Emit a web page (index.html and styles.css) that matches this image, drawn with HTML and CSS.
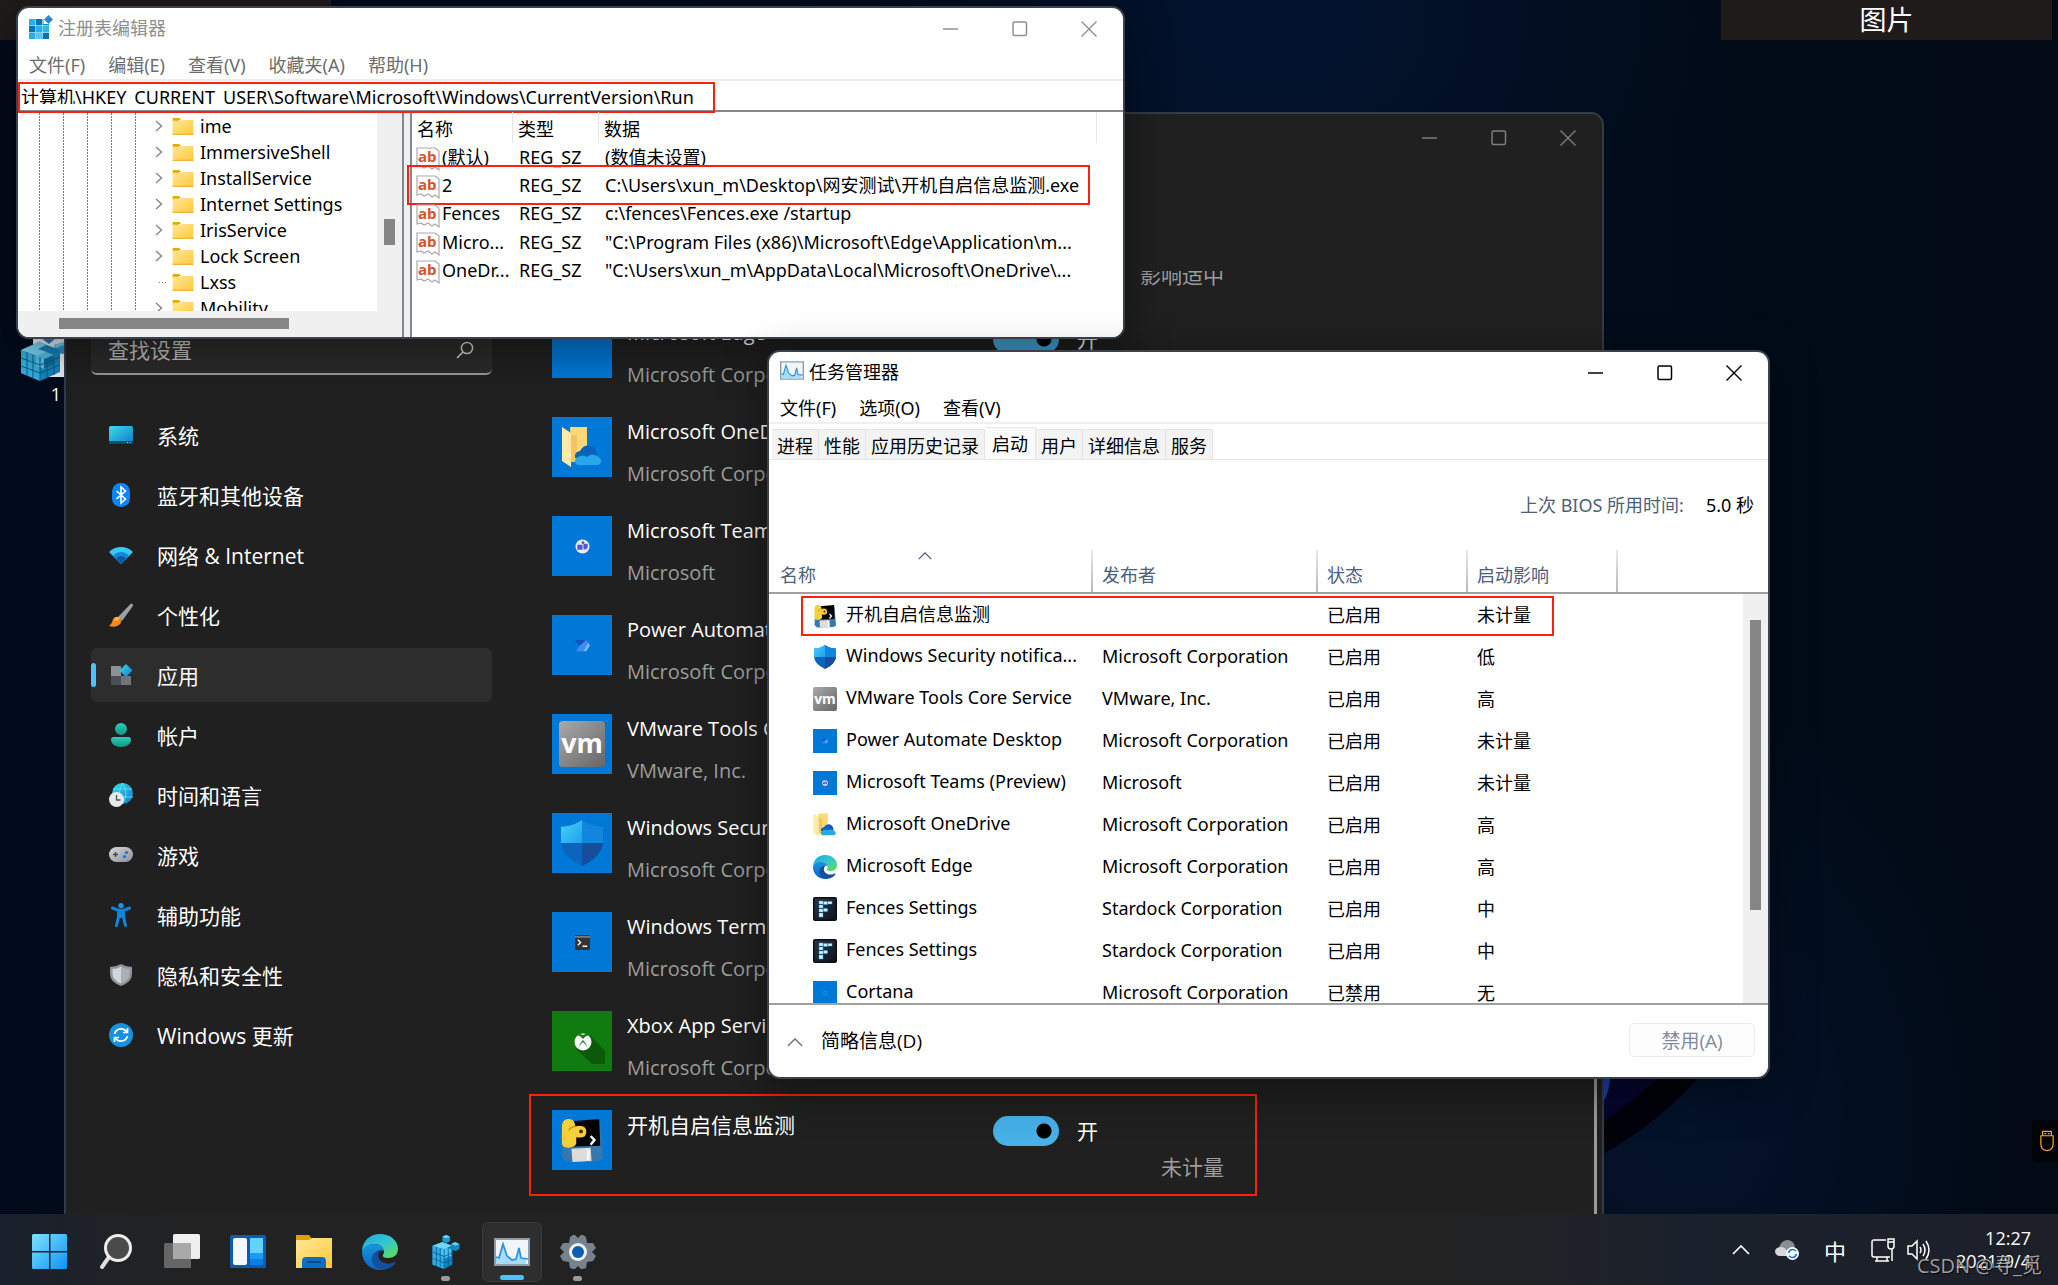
FILE: index.html
```html
<!DOCTYPE html>
<html lang="zh-CN">
  <head>
    <meta charset="UTF-8" />
    <meta name="viewport" content="width=device-width, initial-scale=1.0" />
    <title>任务管理器</title>
    <link rel="stylesheet" href="styles.css">
  </head>
  <body>
    <!-- 图标 -->
    <svg class="sprite" aria-hidden="true">
      <defs>
        <linearGradient id="gFolder" x1="0" y1="0" x2="1" y2="1"><stop offset="0" stop-color="#ffe79b"/><stop offset="1" stop-color="#ffc938"/></linearGradient>
        <linearGradient id="gSky" x1="0" y1="0" x2="1" y2="1"><stop offset="0" stop-color="#37e0e6"/><stop offset="1" stop-color="#1377cf"/></linearGradient>
        <linearGradient id="gGrey" x1="0" y1="0" x2="1" y2="1"><stop offset="0" stop-color="#d5d8dc"/><stop offset="1" stop-color="#8b9097"/></linearGradient>
        <linearGradient id="gWin" x1="0" y1="0" x2="1" y2="1"><stop offset="0" stop-color="#80e2ff"/><stop offset="1" stop-color="#0a94f5"/></linearGradient>
        <linearGradient id="gTeal" x1="0" y1="0" x2="0" y2="1"><stop offset="0" stop-color="#2bd0b8"/><stop offset="1" stop-color="#109682"/></linearGradient>
        <linearGradient id="gEdgeTop" x1="0" y1="0" x2="1" y2="1"><stop offset="0" stop-color="#1fa6e0"/><stop offset=".5" stop-color="#33c6cf"/><stop offset="1" stop-color="#63e04a"/></linearGradient>
        <linearGradient id="gEdge" x1="0" y1="0" x2="0" y2="1"><stop offset="0" stop-color="#1a95dc"/><stop offset="1" stop-color="#0a63c4"/></linearGradient>
        <linearGradient id="gVm" x1="0" y1="0" x2="1" y2="1"><stop offset="0" stop-color="#a9a9a9"/><stop offset="1" stop-color="#666"/></linearGradient>
        <linearGradient id="gFence" x1="0" y1="0" x2="1" y2="1"><stop offset="0" stop-color="#2b3645"/><stop offset="1" stop-color="#0e141c"/></linearGradient>
        <linearGradient id="gShieldL" x1="0" y1="0" x2="1" y2="1"><stop offset="0" stop-color="#45d2fa"/><stop offset="1" stop-color="#1ea2ec"/></linearGradient>
      </defs>
      <symbol id="i-folder" viewBox="0 0 22 18"><path d="M0 0h7l2 2h-2v3H0z" fill="#e8a90c"/><path d="M0 3h8l2-1h12v16H0z" fill="url(#gFolder)"/><path d="M0 16.6h22V18H0z" fill="#eab53a"/></symbol>
      <symbol id="i-chev" viewBox="0 0 8 12"><path d="M1 1l5.500 5L1 11" fill="none" stroke="#8a8a8a" stroke-width="1.500"/></symbol>
      <symbol id="i-ab" viewBox="0 0 24 24"><path d="M1 1h18l4 3v19l-4-3-3 2-4-3-4 2-3-2-4 1z" fill="#fff" stroke="#a9a9a9" stroke-width="1.200"/><text x="2" y="15" font-family="Open Sans" font-size="15" font-weight="700" fill="#d9512c">ab</text></symbol>
      <symbol id="i-min" viewBox="0 0 16 16"><path d="M0 8h15" stroke="currentColor" stroke-width="1.400"/></symbol>
      <symbol id="i-max" viewBox="0 0 16 16"><rect x="1" y="1" width="13.500" height="13.500" rx="1.500" fill="none" stroke="currentColor" stroke-width="1.500"/></symbol>
      <symbol id="i-close" viewBox="0 0 16 16"><path d="M.5.5l15 15M15.500.5l-15 15" stroke="currentColor" stroke-width="1.400"/></symbol>
      <symbol id="i-up" viewBox="0 0 18 10"><path d="M1 9l8-8 8 8" fill="none" stroke="currentColor" stroke-width="1.700"/></symbol>
      <symbol id="i-find" viewBox="0 0 18 18"><circle cx="11" cy="7" r="5.600" fill="none" stroke="currentColor" stroke-width="1.500"/><path d="M7 11l-6 6" stroke="currentColor" stroke-width="1.600"/></symbol>
      <symbol id="i-reg" viewBox="0 0 24 24">
        <path d="M0 4h20v20H0z" fill="#0c8ac9"/><path d="M0 4h6v6H0zM7 11h6v6H7zM0 18h6v6H0z" fill="#27aee8"/><path d="M7 4h6v6H7zM0 11h6v6H0zM14 18h6v6h-6z" fill="#0a73b4"/><path d="M7 18h6v6H7z" fill="#54c8f2"/><path d="M14 11h6v6h-6z" fill="#35b6ea"/>
        <path d="M6.500 4v20M13.500 4v20M0 10.500h20M0 17.500h20" stroke="#bdeaff" stroke-width=".7"/>
        <path d="M14.500 0H24v9h-9.500z" fill="#fff"/><path d="M19.500 0l4.500 4.500L19.500 9 15 4.500z" fill="#1a92cf"/>
      </symbol>
      <symbol id="i-cubes" viewBox="0 0 32 40">
        <path d="M12 9l11 4v21l-9 5-13-5V13z" fill="#0a86c4"/>
        <path d="M1 13l13 4v22L1 34z" fill="#29aee2"/><path d="M12 9l11 4-9 4-13-4z" fill="#6fd4f5"/>
        <path d="M15 17l8-4v9l-8 4z" fill="#0b6ca3"/><path d="M10 18l8-3 4 2v7l-7 3-5-2z" fill="#4fc2ee"/>
        <path d="M1 20l13 5 9-4M1 27l13 5 9-4M5.300 14.500v21M9.600 16v21M14 17v22M18.500 15v22" stroke="#07618f" stroke-width=".9" fill="none"/>
        <path d="M16 1l4.500 2v5l-4 2-4.500-2V3z" fill="#1a9bd6"/><path d="M16 1l4.500 2-4 1.500L12 3z" fill="#7bdcf9"/>
        <path d="M26 9l5 2v6l-4.500 2-5-2v-6z" fill="#1387c0"/><path d="M26 9l5 2-4.500 2-5-2z" fill="#60cdf2"/>
      </symbol>
      <symbol id="i-regfile" viewBox="0 0 44 46">
        <path d="M13 0h31v41H13z" fill="#e9ecee"/>
        <path d="M21 2l8-4 8 3-8 7z" fill="#1b82b5"/><path d="M34 9l10-3v12l-8-1z" fill="#2796c9"/><path d="M34 9l10-3v3l-8 3z" fill="#6fd0f2"/>
        <path d="M1 14L19 6l21 8v22l-20 9L1 37z" fill="#1585bb"/>
        <path d="M1 14l19 7v24L1 37z" fill="#35aede"/><path d="M1 14L19 6l7 3-8 4 9 3-7 5z" fill="#7bd3f2"/>
        <path d="M16 20l10-4 8 3v10l-10 4-8-3z" fill="#54c0ea"/><path d="M24 23l10-4v10l-10 4z" fill="#0e6d9f"/>
        <path d="M1 22l19 7 20-8M1 30l19 7 20-8M7 16v24M13 18.500v24M20 21v24M27 26v16M34 23v16" stroke="#0a5d88" stroke-width="1" fill="none"/>
      </symbol>
      <symbol id="i-task" viewBox="0 0 36 28"><path d="M0 0h36v28H0z" fill="#8c9cab"/><path d="M2 2h32v24H2z" fill="#f1f5f8"/><path d="M2 26v-7l3 1 4-14 4 12 5 4 4-1 3-11 2 10 5 1v5z" fill="#a9dcfa"/><path d="M2 19l3 1 4-14 4 12 5 4 4-1 3-11 2 10 7 1" fill="none" stroke="#2b93dc" stroke-width="1.700"/></symbol>
      <symbol id="i-app" viewBox="0 0 48 48"><path d="M5 6l38-1 3 38-5 3L8 47 3 42z" fill="#3478ae"/><path d="M7 5l35-3 1 28-34 1z" fill="#020202"/><path d="M13 33l20-1 1 14-20 1z" fill="#dcdcdc"/><path d="M29 34h3v11h-3z" fill="#f5f5f5"/><path d="M3 10q0-8 7-8 7 0 7 8 6-2 10 1 3 4 0 9-3 2-9 1v7q-2 4-8 4-7 0-7-5z" fill="#f7cf3b"/><path d="M10 14q3-4 7-4" stroke="#c99a10" stroke-width="1.500" fill="none"/><circle cx="23" cy="15" r="2" fill="#3b2f0a"/><path d="M33 20l4 4-4 5" fill="none" stroke="#fff" stroke-width="2.500"/></symbol>
      <symbol id="i-shield" viewBox="0 0 24 24"><path d="M12 0q5 3.500 11 3.500V11q0 8-11 13Q1 19 1 11V3.500Q7 3.500 12 0z" fill="#0d64bd"/><path d="M12 0v12H1V3.500Q7 3.500 12 0z" fill="url(#gShieldL)"/><path d="M12 0q5 3.500 11 3.500V12H12z" fill="#1186dc"/><path d="M12 12h11q-1 7-11 12z" fill="#154f9c"/></symbol>
      <symbol id="i-shieldgrey" viewBox="0 0 24 24"><path d="M12 1q5 3 11 3v7q0 8-11 12Q1 19 1 11V4q6 0 11-3z" fill="#8f959c"/><path d="M12 3.500v17Q3.500 17 3.500 11V6q5 0 8.500-2.500z" fill="#d3d6db"/><path d="M12 3.500v17q8.500-3.500 8.500-9.500V6q-5 0-8.500-2.500z" fill="#abb0b7"/></symbol>
      <symbol id="i-vm" viewBox="0 0 24 24"><rect width="24" height="24" rx="2" fill="url(#gVm)"/><text x="12" y="16.500" text-anchor="middle" font-family="Open Sans" font-weight="700" font-size="14" fill="#fff">vm</text></symbol>
      <symbol id="i-onedrive" viewBox="0 0 40 42"><path d="M8 1h17v32H10z" fill="#fcd877"/><path d="M0 1l9 6v34l-9-6z" fill="#ffe9a6"/><path d="M9 36h6V9H9z" fill="#f4c659"/><path d="M13 32q-1-6 5-7 4-7 11-5 6 3 6 10z" fill="#0b62ba"/><path d="M14 38q-3-4 2-7 5-3 9 0 4-4 10-1 5 3 4 6-1 3-4 3H17q-2 0-3-1z" fill="#28a8ea"/></symbol>
      <symbol id="i-edge" viewBox="0 0 24 24">
        <path d="M0 12C0 5 5 0 12 0s12 4.500 12 10c0 4-3 6-6.500 6-3 0-4-1-3.500-2 .6-1 .8-1.600.6-2.600C14 8 11 6.500 8 6.700 4 7 1 9.500 0 12z" fill="url(#gEdgeTop)"/>
        <path d="M0 12c1-3.500 4-5.300 8-5.300 4 0 6.500 2.300 6.600 4.500-2.600-1.300-6 .8-6 4.800 0 4 3.500 7.500 7 7.500-1 .4-2.300.5-3.600.5C5.300 24 0 18.600 0 12z" fill="url(#gEdge)"/>
        <path d="M11 10.800c-3 1-5 4-4.300 7.200.7 3.300 3.600 6 7.800 5.800 3.800-.4 6.400-2.300 7.900-4.600.3-.5 0-.8-.5-.6-1 .4-2.400 1-4.400 1-4 0-6.800-2.600-6.600-5.600 0-1.400.7-2.500 1.500-3z" fill="#124f9f"/>
      </symbol>
      <symbol id="i-fences" viewBox="0 0 24 24"><rect width="24" height="24" rx="2" fill="#0a0f16"/><rect x="1.500" y="1.500" width="21" height="21" rx="1" fill="url(#gFence)"/><path d="M6 4h4v3H6zM10.500 4.500h4v3h-4zM15 4.500h4v2.500h-4zM6 8h4v3H6zM6 12h4v3H6zM10.500 11.500h4v3h-4zM6 16h4v4H6z" fill="#d3f0ff" stroke="#2aa4ea" stroke-width=".4"/></symbol>
      <symbol id="i-teams" viewBox="0 0 16 16"><circle cx="8" cy="8" r="7.500" fill="#eceaf8"/><path d="M2.500 6H8v5.500H2.500zM9 5h4.500v4Q12 12 9 11z" fill="#5059c9"/><circle cx="8.500" cy="4" r="1.500" fill="#5059c9"/></symbol>
      <symbol id="i-power" viewBox="0 0 16 16"><path d="M0 2h10l5 6H5z" fill="#1250c4"/><path d="M5 8l7-6 4 6-4 6H1z" fill="#3f8bf5"/><path d="M9 14l5-9 2 3-4 6z" fill="#7ab6ff"/></symbol>
      <symbol id="i-term" viewBox="0 0 16 16"><rect width="16" height="16" rx="1" fill="#333"/><path d="M0 1h16v2H0z" fill="#777"/><path d="M3 5l3 3-3 3M8 12h5" fill="none" stroke="#fff" stroke-width="1.400"/></symbol>
      <symbol id="i-xbox" viewBox="0 0 60 60"><path d="M24 38l14-14 15 16v13H40z" fill="#0a5a0a"/><circle cx="31" cy="31" r="8.500" fill="#fff"/><path d="M25 24q4 1 6 4 2-3 6-4l-2-1q-2 0-4 1-2-1-4-1zM26 38q1-5 5-9 4 4 5 9-2-5-5-7-3 2-5 7z" fill="#107c10"/></symbol>
      <symbol id="i-ring" viewBox="0 0 16 16"><circle cx="8" cy="8" r="5" fill="none" stroke="#12a0e8" stroke-width="2"/></symbol>
      <symbol id="i-system" viewBox="0 0 24 24"><rect y="3" width="24" height="18" rx="1.500" fill="url(#gSky)"/><path d="M0 18h24v1.500q0 1.500-1.500 1.500h-21Q0 21 0 19.500z" fill="#0c4a73"/><path d="M18 19h1v1h-1zM20.500 19h1v1h-1z" fill="#9be4ff"/></symbol>
      <symbol id="i-bt" viewBox="0 0 24 24"><rect x="3" width="18" height="24" rx="8.500" fill="#0a84ff"/><path d="M7.500 8l9 8-4.500 4V4l4.500 4-9 8" fill="none" stroke="#fff" stroke-width="1.600"/></symbol>
      <symbol id="i-wifi" viewBox="0 0 24 24"><path d="M12 21L0 9q5-5 12-5t12 5z" fill="#38c8f4"/><path d="M12 21L4 13q3-4 8-4t8 4z" fill="#1487dc"/><path d="M12 21l-5-5.500q2-2.500 5-2.500t5 2.500z" fill="#0b56a8"/></symbol>
      <symbol id="i-brush" viewBox="0 0 24 24"><path d="M22 .5q3 .5 1.500 3L13 18l-4-4z" fill="#99a1a8"/><path d="M4 16q3-4 7-1 3 4-1 7-4 3-10 1 3-2 4-7z" fill="#f58b1e"/><path d="M5 16q3-3 6-1l-3 3z" fill="#ffc13b"/></symbol>
      <symbol id="i-apps" viewBox="0 0 24 24"><path d="M2 3h10v10H2z" fill="#8d9299"/><path d="M2 13h10v9H2z" fill="#4c5056"/><path d="M12 13h10v9H12z" fill="#70757c"/><path d="M17 1l6.500 6.500L17 14l-6.500-6.500z" fill="url(#gSky)"/></symbol>
      <symbol id="i-user" viewBox="0 0 24 24"><circle cx="12" cy="6" r="6" fill="url(#gTeal)"/><path d="M4.500 14h15q2.500 0 2.500 3-1 7-10 7T2 17q0-3 2.500-3z" fill="url(#gTeal)"/></symbol>
      <symbol id="i-time" viewBox="0 0 24 24"><circle cx="13.500" cy="10.500" r="10.500" fill="url(#gSky)"/><path d="M4 6h19M4 14h20M13.500 0q-6 10 0 21M13.500 0q7 10 0 21" fill="none" stroke="#5ae6ef" stroke-width=".9"/><circle cx="7.500" cy="16.500" r="7.500" fill="#e6e8ea"/><path d="M7.500 12v5h4" fill="none" stroke="#555" stroke-width="1.300"/></symbol>
      <symbol id="i-game" viewBox="0 0 24 24"><rect y="4" width="24" height="15" rx="7.500" fill="url(#gGrey)"/><path d="M6.500 9v5M4 11.500h5" stroke="#444" stroke-width="1.300"/><circle cx="17.500" cy="9.500" r="1.600" fill="#1673cc"/><circle cx="15.500" cy="13.500" r="1.600" fill="#1673cc"/></symbol>
      <symbol id="i-access" viewBox="0 0 24 24"><circle cx="12" cy="2.700" r="2.700" fill="#1a94e6"/><path d="M3.500 5l6 2.500h5l6-2.500M9.500 9v5L7.500 22.500M14.500 9v5l2 8.500" fill="none" stroke="#0f86dd" stroke-width="3" stroke-linecap="round"/><path d="M8.500 7h7v8h-7z" fill="#0f86dd"/></symbol>
      <symbol id="i-update" viewBox="0 0 24 24"><circle cx="12" cy="12" r="12" fill="#1592e2"/><path d="M5.500 11q1.500-5 6.500-5.200 3.500 0 5.500 2.700M18.500 13q-1.500 5-6.500 5.200-3.500 0-5.500-2.700M18.500 5v4.500H14M5.500 19v-4.500H10" fill="none" stroke="#fff" stroke-width="1.700"/></symbol>
      <symbol id="i-start" viewBox="0 0 36 36"><path d="M0 1.500Q0 0 1.500 0H17v17H0zM18.500 0h15Q35 0 35 1.500V17H18.500zM0 18.500h17V35H1.500Q0 35 0 33.500zM18.500 18.500H35v15q0 1.500-1.500 1.500h-15z" fill="url(#gWin)"/></symbol>
      <symbol id="i-search" viewBox="0 0 36 36"><path d="M11 23l-7 10" stroke="#ddd" stroke-width="4" stroke-linecap="round"/><circle cx="20" cy="14" r="12.500" fill="#4a4a4a" stroke="#eee" stroke-width="3"/></symbol>
      <symbol id="i-view" viewBox="0 0 36 36"><rect x="9" y="0" width="27" height="25" rx="1.500" fill="#efefef"/><rect x="0" y="9" width="27" height="25" rx="1.500" fill="#666" /><path d="M9 9h18v16H9z" fill="#a9a9a9"/></symbol>
      <symbol id="i-widget" viewBox="0 0 36 36"><rect y="1" width="36" height="33" rx="1.500" fill="#0b5cb0"/><rect x="3" y="4" width="14" height="27" rx="2" fill="#f5f8fb"/><path d="M20 4h13v15H20z" fill="#62d3fb"/><path d="M20 19h13v6H20z" fill="#1c9cf0"/><path d="M20 25h13v6H20z" fill="#0c7fe6"/></symbol>
      <symbol id="i-explorer" viewBox="0 0 36 36"><path d="M0 1h13l3 4-3 3H0z" fill="#e2a000"/><path d="M0 6h13l3-2h20v30H0z" fill="url(#gFolder)"/><path d="M6 34V27q0-4 4-4h16q4 0 4 4v7z" fill="#0c70c2"/><path d="M11 28h14" stroke="#0a4b88" stroke-width="2"/></symbol>
      <symbol id="i-gear" viewBox="0 0 36 36"><path d="M13 1h2l3 3 3-3h2l3 2 1 6 6 0 3 5-4 4 4 4-3 5-6 1-1 6-3 1h-2l-3-3-3 3h-2l-3-1-1-6-6-1-3-5 4-4-4-4 3-5h6l1-6z" fill="#78828c"/><circle cx="18" cy="18" r="9" fill="#edf1f4"/><circle cx="18" cy="18" r="6" fill="#0c5cb4"/></symbol>
      <symbol id="i-cloud" viewBox="0 0 24 20"><path d="M4 8q2-8 9-8 6 1 7 7l-8 4z" fill="#8a8d92"/><path d="M4 16q-4-1-4-5 1-4 6-4 4 0 6 4l3 5z" fill="#d6d7da"/><circle cx="17.500" cy="13.500" r="6.500" fill="#fff"/><path d="M13.500 13q1-3.500 4-3.500 2 0 3.500 1.500M21.500 14q-1 3.500-4 3.500-2 0-3.500-1.500" fill="none" stroke="#1976d2" stroke-width="1.700"/></symbol>
      <symbol id="i-net" viewBox="0 0 24 24"><path d="M15 2H3Q1 2 1 4v13q0 2 2 2h16M6 19v4M16 19v4M4 23h14M21 11v12M17 1h6v7q0 3-3 3t-3-3zM17 4h6" fill="none" stroke="#fff" stroke-width="1.500"/></symbol>
      <symbol id="i-sound" viewBox="0 0 24 24"><path d="M1 8h4l5-5v18l-5-5H1zM13 9q2 3 0 6M16 6q4 6 0 12M19 3q6 9 0 18" fill="none" stroke="#fff" stroke-width="1.500"/></symbol>
      <symbol id="i-usb" viewBox="0 0 16 24"><path d="M1 6h14v9q0 7-7 8-7-1-7-8zM3 6V1h10v5M5 3.500h2M9 3.500h2" fill="none" stroke="#f5a623" stroke-width="1.400"/></symbol>
    </svg>

    <main class="desktop">
      <svg class="bloom" viewBox="0 0 110 90" aria-hidden="true"><path d="M0 0h100Q60 48 0 82z" fill="#01020a"/><path d="M0 0h62Q34 26 0 50z" fill="#03062c"/><path d="M0 0h8Q6 22 0 30z" fill="#1840a8"/></svg>
      <div class="fence fence-left"></div>
      <div class="fence fence-right">图片</div>
      <div class="shortcut"><svg><use href="#i-regfile"/></svg><span>1</span></div>

      <!-- 设置 -->
      <section class="window settings">
        <header class="titlebar">
          <div class="controls">
            <button aria-label="最小化"><svg><use href="#i-min"/></svg></button>
            <button aria-label="最大化"><svg><use href="#i-max"/></svg></button>
            <button aria-label="关闭"><svg><use href="#i-close"/></svg></button>
          </div>
        </header>
        <div class="settings-body">
          <aside class="sidebar">
            <label class="search"><input type="text" placeholder="查找设置" aria-label="查找设置" /><svg><use href="#i-find"/></svg></label>
            <nav>
              <a href="#"><svg><use href="#i-system"/></svg>系统</a>
              <a href="#"><svg><use href="#i-bt"/></svg>蓝牙和其他设备</a>
              <a href="#"><svg><use href="#i-wifi"/></svg>网络 &amp; Internet</a>
              <a href="#"><svg><use href="#i-brush"/></svg>个性化</a>
              <a href="#" class="active"><svg><use href="#i-apps"/></svg>应用</a>
              <a href="#"><svg><use href="#i-user"/></svg>帐户</a>
              <a href="#"><svg><use href="#i-time"/></svg>时间和语言</a>
              <a href="#"><svg><use href="#i-game"/></svg>游戏</a>
              <a href="#"><svg><use href="#i-access"/></svg>辅助功能</a>
              <a href="#"><svg><use href="#i-shieldgrey"/></svg>隐私和安全性</a>
              <a href="#"><svg><use href="#i-update"/></svg>Windows 更新</a>
            </nav>
          </aside>
          <div class="apps">
            <ul>
              <li>
                <div class="app-state"><p class="impact">影响适中</p></div>
              </li>
              <li>
                <div class="tile"></div>
                <div class="app-name"><p>Microsoft Edge</p><p class="sub">Microsoft Corporation</p></div>
                <div class="app-state"><label><input type="checkbox" checked />开</label></div>
              </li>
              <li>
                <div class="tile"><svg class="mid"><use href="#i-onedrive"/></svg></div>
                <div class="app-name"><p>Microsoft OneDrive</p><p class="sub">Microsoft Corporation</p></div>
              </li>
              <li>
                <div class="tile"><svg class="small"><use href="#i-teams"/></svg></div>
                <div class="app-name"><p>Microsoft Teams</p><p class="sub">Microsoft</p></div>
              </li>
              <li>
                <div class="tile"><svg class="small"><use href="#i-power"/></svg></div>
                <div class="app-name"><p>Power Automate Desktop</p><p class="sub">Microsoft Corporation</p></div>
              </li>
              <li>
                <div class="tile"><svg class="large"><use href="#i-vm"/></svg></div>
                <div class="app-name"><p>VMware Tools Core Service</p><p class="sub">VMware, Inc.</p></div>
              </li>
              <li>
                <div class="tile"><svg class="large"><use href="#i-shield"/></svg></div>
                <div class="app-name"><p>Windows Security</p><p class="sub">Microsoft Corporation</p></div>
              </li>
              <li>
                <div class="tile"><svg class="small"><use href="#i-term"/></svg></div>
                <div class="app-name"><p>Windows Terminal</p><p class="sub">Microsoft Corporation</p></div>
              </li>
              <li>
                <div class="tile xbox"><svg class="full"><use href="#i-xbox"/></svg></div>
                <div class="app-name"><p>Xbox App Services</p><p class="sub">Microsoft Corporation</p></div>
              </li>
              <li class="marked">
                <div class="tile"><svg class="large"><use href="#i-app"/></svg></div>
                <div class="app-name"><p>开机自启信息监测</p></div>
                <div class="app-state"><label><input type="checkbox" checked />开</label><p class="sub">未计量</p></div>
              </li>
            </ul>
          </div>
          <div class="settings-scroll"></div>
        </div>
      </section>

      <!-- 注册表编辑器 -->
      <section class="window regedit">
        <header class="titlebar">
          <svg class="reg-icon"><use href="#i-reg"/></svg>
          <h1>注册表编辑器</h1>
          <div class="controls">
            <button aria-label="最小化"><svg><use href="#i-min"/></svg></button>
            <button aria-label="最大化"><svg><use href="#i-max"/></svg></button>
            <button aria-label="关闭"><svg><use href="#i-close"/></svg></button>
          </div>
        </header>
        <div class="menu">
          <button>文件(F)</button><button>编辑(E)</button><button>查看(V)</button><button>收藏夹(A)</button><button>帮助(H)</button>
        </div>
        <div class="address">
          <input type="text" aria-label="地址" value="计算机\HKEY_CURRENT_USER\Software\Microsoft\Windows\CurrentVersion\Run" />
        </div>
        <div class="panes">
          <div class="tree-pane">
            <div class="tree-top">
              <ul class="tree">
                <li><svg class="chev"><use href="#i-chev"/></svg><svg class="folder"><use href="#i-folder"/></svg>ime</li>
                <li><svg class="chev"><use href="#i-chev"/></svg><svg class="folder"><use href="#i-folder"/></svg>ImmersiveShell</li>
                <li><svg class="chev"><use href="#i-chev"/></svg><svg class="folder"><use href="#i-folder"/></svg>InstallService</li>
                <li><svg class="chev"><use href="#i-chev"/></svg><svg class="folder"><use href="#i-folder"/></svg>Internet Settings</li>
                <li><svg class="chev"><use href="#i-chev"/></svg><svg class="folder"><use href="#i-folder"/></svg>IrisService</li>
                <li><svg class="chev"><use href="#i-chev"/></svg><svg class="folder"><use href="#i-folder"/></svg>Lock Screen</li>
                <li class="leaf"><svg class="folder"><use href="#i-folder"/></svg>Lxss</li>
                <li><svg class="chev"><use href="#i-chev"/></svg><svg class="folder"><use href="#i-folder"/></svg>Mobility</li>
              </ul>
              <div class="vscroll"></div>
            </div>
            <div class="hscroll"></div>
          </div>
          <div class="values">
            <table>
              <colgroup><col class="c-name" /><col class="c-type" /><col class="c-data" /><col /></colgroup>
              <thead>
                <tr><th>名称</th><th>类型</th><th>数据</th><th></th></tr>
              </thead>
              <tbody>
                <tr><td><svg><use href="#i-ab"/></svg>(默认)</td><td>REG_SZ</td><td>(数值未设置)</td></tr>
                <tr class="marked"><td><svg><use href="#i-ab"/></svg>2</td><td>REG_SZ</td><td>C:\Users\xun_m\Desktop\网安测试\开机自启信息监测.exe</td></tr>
                <tr><td><svg><use href="#i-ab"/></svg>Fences</td><td>REG_SZ</td><td>c:\fences\Fences.exe /startup</td></tr>
                <tr><td><svg><use href="#i-ab"/></svg>Micro...</td><td>REG_SZ</td><td>"C:\Program Files (x86)\Microsoft\Edge\Application\m...</td></tr>
                <tr><td><svg><use href="#i-ab"/></svg>OneDr...</td><td>REG_SZ</td><td>"C:\Users\xun_m\AppData\Local\Microsoft\OneDrive\...</td></tr>
              </tbody>
            </table>
          </div>
        </div>
      </section>

      <!-- 任务管理器 -->
      <section class="window taskmgr">
        <header class="titlebar">
          <svg class="task-icon"><use href="#i-task"/></svg>
          <h1>任务管理器</h1>
          <div class="controls">
            <button aria-label="最小化"><svg><use href="#i-min"/></svg></button>
            <button aria-label="最大化"><svg><use href="#i-max"/></svg></button>
            <button aria-label="关闭"><svg><use href="#i-close"/></svg></button>
          </div>
        </header>
        <div class="menu">
          <button>文件(F)</button><button>选项(O)</button><button>查看(V)</button>
        </div>
        <div class="tabs">
          <button>进程</button><button>性能</button><button>应用历史记录</button><button class="active">启动</button><button>用户</button><button>详细信息</button><button>服务</button>
        </div>
        <p class="bios"><span>上次 BIOS 所用时间:</span>5.0 秒</p>
        <div class="startup">
          <table>
            <colgroup><col class="s-name" /><col class="s-pub" /><col class="s-state" /><col class="s-state" /><col /></colgroup>
            <thead>
              <tr><th>名称<svg><use href="#i-up"/></svg></th><th>发布者</th><th>状态</th><th>启动影响</th><th></th></tr>
            </thead>
            <tbody>
              <tr class="marked"><td><svg><use href="#i-app"/></svg>开机自启信息监测</td><td></td><td>已启用</td><td>未计量</td></tr>
              <tr><td><svg><use href="#i-shield"/></svg>Windows Security notifica...</td><td>Microsoft Corporation</td><td>已启用</td><td>低</td></tr>
              <tr><td><svg><use href="#i-vm"/></svg>VMware Tools Core Service</td><td>VMware, Inc.</td><td>已启用</td><td>高</td></tr>
              <tr><td><svg class="blue"><use href="#i-power"/></svg>Power Automate Desktop</td><td>Microsoft Corporation</td><td>已启用</td><td>未计量</td></tr>
              <tr><td><svg class="blue"><use href="#i-teams"/></svg>Microsoft Teams (Preview)</td><td>Microsoft</td><td>已启用</td><td>未计量</td></tr>
              <tr><td><svg><use href="#i-onedrive"/></svg>Microsoft OneDrive</td><td>Microsoft Corporation</td><td>已启用</td><td>高</td></tr>
              <tr><td><svg><use href="#i-edge"/></svg>Microsoft Edge</td><td>Microsoft Corporation</td><td>已启用</td><td>高</td></tr>
              <tr><td><svg><use href="#i-fences"/></svg>Fences Settings</td><td>Stardock Corporation</td><td>已启用</td><td>中</td></tr>
              <tr><td><svg><use href="#i-fences"/></svg>Fences Settings</td><td>Stardock Corporation</td><td>已启用</td><td>中</td></tr>
              <tr><td><svg class="blue"><use href="#i-ring"/></svg>Cortana</td><td>Microsoft Corporation</td><td>已禁用</td><td>无</td></tr>
            </tbody>
          </table>
          <div class="startup-scroll"></div>
        </div>
        <footer>
          <button class="brief"><svg><use href="#i-up"/></svg>简略信息(D)</button>
          <button class="disable" disabled>禁用(A)</button>
        </footer>
      </section>

      <div class="usb"><svg><use href="#i-usb"/></svg></div>
    </main>

    <footer class="taskbar">
      <div class="pinned">
        <button aria-label="开始"><svg><use href="#i-start"/></svg></button>
        <button aria-label="搜索"><svg><use href="#i-search"/></svg></button>
        <button aria-label="任务视图"><svg><use href="#i-view"/></svg></button>
        <button aria-label="小组件"><svg><use href="#i-widget"/></svg></button>
        <button aria-label="文件资源管理器"><svg><use href="#i-explorer"/></svg></button>
        <button aria-label="Microsoft Edge"><svg><use href="#i-edge"/></svg></button>
        <button aria-label="注册表编辑器" class="running"><svg><use href="#i-cubes"/></svg></button>
        <button aria-label="任务管理器" class="current"><svg><use href="#i-task"/></svg></button>
        <button aria-label="设置" class="running"><svg><use href="#i-gear"/></svg></button>
      </div>
      <div class="tray">
        <svg class="t-up"><use href="#i-up"/></svg>
        <svg class="t-icon"><use href="#i-cloud"/></svg>
        <span class="ime">中</span>
        <svg class="t-icon"><use href="#i-net"/></svg>
        <svg class="t-sound"><use href="#i-sound"/></svg>
        <time>12:27<br />2021/9/4</time>
      </div>
      <span class="watermark">CSDN @寻_觅</span>
    </footer>
  </body>
</html>
```

FILE: styles.css
```css
* {
  box-sizing: border-box;
  margin: 0;
  padding: 0;
}

body {
  display: flex;
  flex-direction: column;
  height: 100vh;
  overflow: hidden;
  font-family: "Open Sans", "Noto Sans CJK SC", sans-serif;
  font-size: 18px;
  color: #000;
  background: #020c1c;
}

button,
input {
  font: inherit;
  color: inherit;
  background: none;
  border: none;
  outline: none;
}

ul {
  list-style: none;
}

h1 {
  font-size: 18px;
  font-weight: normal;
}

.sprite {
  position: absolute;
  width: 0;
  height: 0;
}

/* 桌面 */
.desktop {
  position: relative;
  flex: 1;
  overflow: hidden;
  background:
    radial-gradient(ellipse 420px 300px at 62% 2%, #03132f, transparent),
    radial-gradient(ellipse 320px 420px at 82% 92%, #04122a, transparent),
    linear-gradient(90deg, #020b1b, #020d1e 60%, #010a15);
}

.bloom {
  position: absolute;
  left: 1603px;
  bottom: 52px;
  width: 110px;
  height: 90px;
}

.fence {
  position: absolute;
  top: 0;
  width: 331px;
  height: 40px;
  line-height: 40px;
  font-size: 27px;
  text-align: center;
  color: #fff;
  background: #1f1b1a;
}

.fence-left {
  left: 0;
}

.fence-right {
  right: 6px;
}

.shortcut {
  position: absolute;
  left: 20px;
  top: 336px;
  width: 72px;
  color: #fff;
  text-align: center;
}

.shortcut svg {
  display: block;
  width: 44px;
  height: 46px;
}

.usb {
  position: absolute;
  right: 0;
  bottom: 52px;
  width: 26px;
  height: 42px;
  padding: 10px 4px 0 8px;
  border-radius: 4px 0 0 4px;
  background: #020407;
}

.usb svg {
  display: block;
  width: 14px;
  height: 22px;
}

/* 窗口 */
.window {
  position: absolute;
  display: flex;
  flex-direction: column;
  overflow: hidden;
  border-radius: 11px;
  background: #fff;
  box-shadow: 0 0 0 2px #3b424b, 0 12px 44px 4px rgba(0, 0, 0, 0.4);
}

.titlebar {
  display: flex;
  align-items: center;
  height: 40px;
  padding: 0 0 3px 11px;
}

.controls {
  display: flex;
  height: 100%;
  margin-left: auto;
}

.controls button {
  width: 69px;
}

.controls svg {
  width: 16px;
  height: 16px;
  vertical-align: middle;
}

.menu {
  display: flex;
  gap: 23px;
  height: 32px;
  padding-left: 11px;
}

.marked::after {
  content: "";
  position: absolute;
  border: 2px solid #fb2010;
  pointer-events: none;
}

/* 设置 */
.settings {
  top: 114px;
  left: 66px;
  right: 456px;
  bottom: 0;
  border-radius: 11px 11px 0 0;
  color: #fff;
  font-size: 21px;
  background: #202020;
  box-shadow: 0 0 0 2px #343b45;
}

.settings .titlebar {
  height: 46px;
  color: #7d7d7d;
}

.settings-body {
  display: flex;
  flex: 1;
  min-height: 0;
}

.sidebar {
  width: 426px;
  padding: 167px 0 0 25px;
}

.search {
  display: flex;
  align-items: center;
  height: 48px;
  padding: 0 18px 0 17px;
  border-bottom: 2px solid #9a9a9a;
  border-radius: 6px;
  color: #d0d0d0;
  background: #2b2b2b;
}

.search input {
  flex: 1;
  min-width: 0;
}

.search input::placeholder {
  color: #bdbdbd;
}

.search svg {
  width: 18px;
  height: 18px;
}

nav {
  display: flex;
  flex-direction: column;
  gap: 6px;
  margin-top: 33px;
}

nav a {
  display: flex;
  align-items: center;
  gap: 24px;
  height: 54px;
  padding-left: 18px;
  border-radius: 6px;
  color: #fff;
  text-decoration: none;
}

nav svg {
  width: 24px;
  height: 24px;
}

nav .active {
  position: relative;
  background: #2d2d2d;
}

nav .active::before {
  content: "";
  position: absolute;
  left: 0;
  width: 5px;
  height: 24px;
  border-radius: 3px;
  background: #4cc2ff;
}

.apps {
  flex: 1;
  margin-top: 111px;
  padding-left: 60px;
  overflow: hidden;
}

/* 列表已滚动到底部 */
.apps ul {
  margin-top: -64px;
}

.apps li {
  position: relative;
  display: grid;
  grid-template-columns: 60px 351px 231px;
  gap: 15px;
  width: 672px;
  height: 99px;
  padding-top: 12px;
  line-height: 30px;
}

.apps .marked::after {
  inset: -4px -33px 1px -23px;
}

.tile {
  display: flex;
  align-items: center;
  justify-content: center;
  width: 60px;
  height: 60px;
  background: #0078d7;
}

.xbox {
  background: #107c10;
}

.small {
  width: 15px;
  height: 15px;
}

.mid {
  width: 40px;
  height: 42px;
}

.large {
  width: 46px;
  height: 46px;
}

.full {
  width: 60px;
  height: 60px;
}

.app-name {
  display: flex;
  flex-direction: column;
  gap: 12px;
  font-size: 20px;
  white-space: nowrap;
}

.marked .app-name {
  font-size: 21px;
}

.sub,
.impact {
  color: #9d9d9d;
}

.app-state {
  grid-column: 3;
  display: flex;
  flex-direction: column;
  gap: 6px;
  padding-top: 6px;
  text-align: right;
}

.app-state label {
  display: flex;
  align-items: center;
  gap: 18px;
  height: 30px;
}

.impact {
  margin-top: 35px;
}

.app-state input {
  appearance: none;
  width: 66px;
  height: 30px;
  border-radius: 15px;
  background: radial-gradient(circle at 51px 15px, #000 7px, #47b1e8 8px);
}

.settings-scroll {
  align-self: flex-end;
  width: 3px;
  height: 60%;
  margin-right: 5px;
  background: #9a9a9a;
}

/* 注册表编辑器 */
.regedit {
  top: 8px;
  left: 18px;
  right: 935px;
  height: 329px;
}

.regedit,
.taskmgr {
  font-family: "Noto Sans", "Noto Sans CJK SC", sans-serif;
}

.regedit .titlebar {
  gap: 5px;
  color: #8f8f8f;
}

.reg-icon {
  width: 24px;
  height: 24px;
}

.regedit .menu {
  height: 31px;
  color: #6d6d6d;
}

.address {
  position: relative;
  height: 33px;
  padding: 2px 3px 0;
  border-top: 2px solid #ececec;
  border-bottom: 2px solid #828790;
}

.address input {
  display: block;
  width: 100%;
  height: 26px;
  clip-path: inset(0 0 5px);
}

/* 路径高亮框 */
.address::after {
  content: "";
  position: absolute;
  top: 1px;
  left: 0;
  width: 693px;
  height: 27px;
  border: 2px solid #fb2010;
}

.panes {
  display: flex;
  flex: 1;
  gap: 6px;
  min-height: 0;
  background: #f0f0f0;
}

.tree-pane {
  display: flex;
  flex-direction: column;
  width: 386px;
  border-right: 2px solid #828790;
}

.tree-top {
  display: flex;
  height: 199px;
  background: #fff;
}

.tree {
  flex: 1;
  padding: 1px 0 0 137px;
  overflow: hidden;
  background:
    repeating-linear-gradient(#fff 0 1px, transparent 1px 3px),
    repeating-linear-gradient(90deg, transparent 0 21px, #777 21px 22px, transparent 22px 24px) 0 0 / 120px 100% no-repeat;
}

.tree li {
  display: flex;
  align-items: center;
  height: 26px;
  line-height: 26px;
}

.chev {
  width: 8px;
  height: 12px;
  margin-right: 9px;
}

.folder {
  width: 22px;
  height: 17px;
  margin-right: 6px;
}

.tree .leaf {
  padding-left: 17px;
  background: repeating-linear-gradient(90deg, #777 0 1px, transparent 1px 3px) 4px 50% / 9px 1px no-repeat;
}

.vscroll {
  width: 25px;
  padding: 107px 7px 0;
  background: #f0f0f0;
}

.vscroll::before,
.hscroll::before {
  content: "";
  display: block;
  width: 11px;
  height: 26px;
  background: #858585;
}

.hscroll {
  flex: 1;
  padding: 7px 0 0 41px;
}

.hscroll::before {
  width: 230px;
  height: 11px;
}

.values {
  flex: 1;
  min-width: 0;
  border-left: 2px solid #828790;
  background: #fff;
}

table {
  width: 100%;
  border-collapse: separate;
  border-spacing: 0;
  table-layout: fixed;
}

th {
  font-weight: normal;
  text-align: left;
}

td {
  white-space: nowrap;
}

.c-name {
  width: 101px;
}

.c-type {
  width: 86px;
}

.c-data {
  width: 498px;
}

.values th {
  height: 31px;
  padding-left: 5px;
  border-right: 1px solid #e5e5e5;
}

.values th:last-child {
  border: none;
}

.values tr {
  position: relative;
}

.values td {
  height: 28px;
  line-height: 28px;
  padding-left: 6px;
}

.values td:first-child {
  padding-left: 4px;
}

.values svg {
  width: 24px;
  height: 24px;
  margin-right: 2px;
  vertical-align: middle;
}

.values .marked::after {
  inset: -6px 33px -6px -5px;
}

/* 任务管理器 */
.taskmgr {
  top: 352px;
  left: 769px;
  right: 290px;
  bottom: 137px;
}

.taskmgr .titlebar {
  gap: 5px;
}

.task-icon {
  width: 24px;
  height: 19px;
}

.taskmgr .menu {
  border-bottom: 2px solid #f0f0f0;
}

.tabs {
  display: flex;
  align-items: flex-end;
  height: 36px;
  padding-left: 3px;
  border-bottom: 1px solid #e5e5e5;
}

.tabs button {
  height: 30px;
  padding: 0 5px;
  border: 1px solid #e5e5e5;
  border-width: 1px 1px 0 0;
  background: #f3f3f3;
}

.tabs .active {
  height: 32px;
  padding: 0 7px 2px;
  background: #fbfbfb;
}

.bios {
  display: flex;
  justify-content: flex-end;
  align-items: center;
  gap: 22px;
  height: 90px;
  padding: 0 14px 2px 0;
}

.bios span,
.startup th {
  color: #4c607a;
}

.startup {
  position: relative;
  flex: 1;
  min-height: 0;
  overflow: hidden;
  border-bottom: 2px solid #a0a0a0;
}

.s-name {
  width: 324px;
}

.s-pub {
  width: 225px;
}

.s-state {
  width: 150px;
}

.startup th {
  position: relative;
  height: 44px;
  padding: 6px 0 0 9px;
  border-bottom: 2px solid #a0a0a0;
  background: linear-gradient(#e8e8e8, #b8b8b8) right / 2px 100% no-repeat;
}

.startup th:first-child {
  padding-left: 11px;
}

.startup th:last-child {
  background: none;
}

.startup th svg {
  position: absolute;
  top: 2px;
  left: 46%;
  width: 14px;
  height: 8px;
}

.startup td {
  height: 42px;
  padding: 0 0 2px 9px;
}

.startup td:first-child {
  padding-left: 44px;
}

.startup td svg {
  width: 24px;
  height: 24px;
  margin-right: 9px;
  vertical-align: middle;
}

.startup .blue {
  padding: 9px;
  background: #0078d7;
}

.startup tr {
  position: relative;
}

.startup .marked::after {
  inset: 2px 214px 0 32px;
}

.startup-scroll {
  position: absolute;
  top: 44px;
  right: 0;
  bottom: 0;
  width: 25px;
  padding: 26px 7px 93px;
  background: #f0f0f0;
}

.startup-scroll::before {
  content: "";
  display: block;
  height: 100%;
  background: #858585;
}

.taskmgr footer {
  display: flex;
  align-items: center;
  justify-content: space-between;
  height: 72px;
  padding: 0 13px 3px 18px;
  font-family: "Open Sans", "Noto Sans CJK SC", sans-serif;
}

.brief {
  font-size: 19px;
}

.brief svg {
  width: 16px;
  height: 9px;
  margin-right: 18px;
  vertical-align: middle;
  color: #777;
}

.disable {
  width: 126px;
  height: 34px;
  border: 1px solid #ebebeb;
  border-radius: 5px;
  font-size: 19px;
  color: #8189a0;
  background: #fdfdfd;
}

/* 任务栏 */
.taskbar {
  position: relative;
  display: flex;
  justify-content: space-between;
  height: 71px;
  color: #fff;
  background: linear-gradient(90deg, #1a212d, #222 9%, #222 70%, #1b212c 82%, #1d2029);
}

.pinned {
  display: flex;
  align-items: center;
  gap: 6px;
  padding: 4px 0 0 20px;
}

.pinned button {
  position: relative;
  width: 60px;
  height: 60px;
  border-radius: 6px;
}

.pinned svg {
  width: 36px;
  height: 36px;
  vertical-align: middle;
}

.pinned .current {
  border: 1px solid #3a3a3a;
  background: #2e2e2e;
}

.running::after,
.current::after {
  content: "";
  position: absolute;
  left: 50%;
  bottom: 1px;
  width: 9px;
  height: 5px;
  margin-left: -5px;
  border-radius: 3px;
  background: #9a9a9a;
}

.current::after {
  width: 24px;
  margin-left: -12px;
  background: #4cc2ff;
}

.tray {
  display: flex;
  align-items: center;
  padding-right: 27px;
}

.tray svg {
  width: 24px;
  height: 24px;
  margin-right: 25px;
}

.tray .t-up {
  width: 18px;
  height: 10px;
}

.ime {
  margin-right: 25px;
  font-size: 22px;
}

.tray .t-icon:nth-child(4) {
  margin-right: 12px;
}

.tray .t-sound {
  margin-right: 20px;
}

time {
  width: 80px;
  line-height: 23px;
  text-align: right;
}

.watermark {
  position: absolute;
  right: 16px;
  bottom: 6px;
  font-size: 20px;
  color: #b4b4b4;
  opacity: 0.85;
  text-shadow: 1px 1px 1px #000;
}
```
